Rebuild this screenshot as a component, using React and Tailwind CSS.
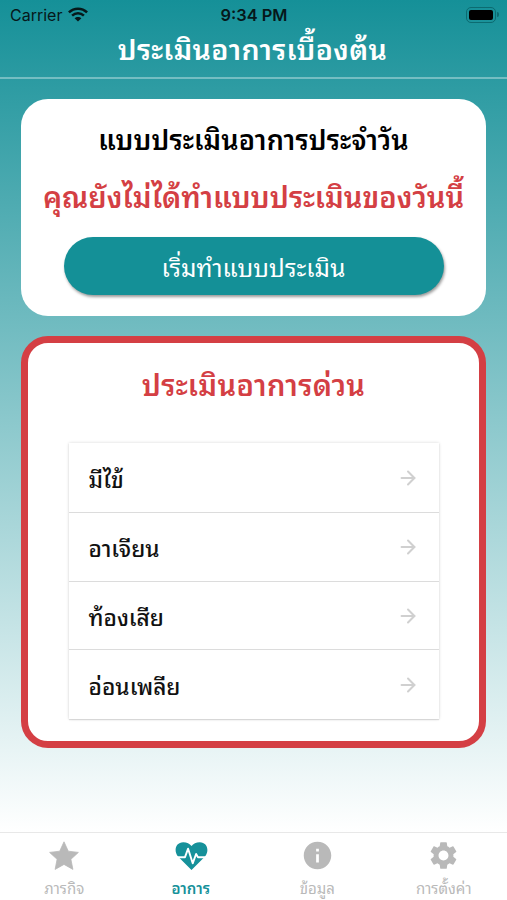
import * as React from 'react';
import { ArrowRight } from 'lucide-react';
import { MdInfo, MdSettings } from 'react-icons/md';

const symptoms = ['มีไข้', 'อาเจียน', 'ท้องเสีย', 'อ่อนเพลีย'];

const StarIcon = () => (
  <svg width="32" height="32" viewBox="0 0 32 32">
    <path
      d="M16 1.800 20.300 11.200 30.400 12.400 22.900 19.300 24.900 29.400 16 24.400 7.100 29.400 9.100 19.300 1.600 12.400 11.700 11.200z"
      fill="#b9b9b9"
      stroke="#b9b9b9"
      strokeWidth=".8"
      strokeLinejoin="round"
    />
  </svg>
);

const HeartPulse = () => (
  <svg width="34" height="30" viewBox="0 0 34 30">
    <path
      d="M17.500 29 4 15.500C-.6 9.500 1.600 1.600 9.200 1.300c3.700 0 6.500 1.400 8.300 3.700 1.800-2.300 4.600-3.700 8.300-3.700 7.600.3 9.800 8.200 5.200 14.200z"
      fill="#16919a"
    />
    <path
      d="M1 16.200h10l3.100-8.500 4.600 14.600 3.400-9.300 1.900 3.200H34"
      fill="none"
      stroke="#fff"
      strokeWidth="1.900"
      strokeLinejoin="round"
    />
  </svg>
);

const WifiIcon = () => (
  <svg width="20" height="15" viewBox="0 0 20 15" fill="none" stroke="#06181a" strokeWidth="2.500">
    <path d="M.9 5.400c5.200-5 13-5 18.200 0M4.100 8.700c3.400-3.200 8.400-3.200 11.800 0" />
    <path d="M10 14.600 6.600 11.300c1.900-1.800 4.900-1.800 6.800 0z" fill="#06181a" stroke="none" />
  </svg>
);

const StatusBar = () => (
  <div className="flex h-[29px] items-center justify-between pl-[10px] pr-[8px] font-['Inter','Liberation_Sans',sans-serif] text-[#06181a]">
    <div className="flex w-[118px] items-center gap-[6px]">
      <span className="text-[16px] leading-5">Carrier</span>
      <WifiIcon />
    </div>
    <span className="pt-px text-[16.400px] leading-5 font-semibold">9:34 PM</span>
    <div className="flex w-[119px] items-center justify-end gap-px">
      <div className="h-4 w-[30px] rounded-[5px] border border-[#0c6b71] p-[2px]">
        <div className="h-full rounded-[2px] bg-black" />
      </div>
      <div className="h-[5px] w-[2px] rounded-r bg-[#0c6b71]" />
    </div>
  </div>
);

const SymptomRow = ({ label }) => (
  <div className="flex h-[68.700px] items-center justify-between border-b border-[#dcdcdc] pr-[20px] pl-5 first:h-[70px] last:border-b-0">
    <span className="text-[22.600px] leading-8 font-medium whitespace-nowrap text-[#111]">{label}</span>
    <ArrowRight size={22} color="#d0d0d0" strokeWidth={2.2} />
  </div>
);

const TabItem = ({ icon, label, active }) => (
  <div className={`flex flex-1 flex-col items-center ${active ? 'font-semibold text-[#16919a]' : 'text-[#b9b9b9]'}`}>
    <div className="flex h-[44px] items-center pt-px">{icon}</div>
    <span className="text-[15px] leading-5 whitespace-nowrap">{label}</span>
  </div>
);

const App = () => {
  return (
    <div className="flex h-[900px] w-[507px] flex-col overflow-hidden bg-white font-['Noto_Sans_Thai_Looped','Noto_Sans_Thai','Noto_Sans',sans-serif]">
      <div className="flex h-[832px] flex-col bg-linear-to-b/srgb from-[#159098] to-white">
        <StatusBar />
        <header className="flex h-[50px] items-center justify-center border-b-2 border-white/35 pr-[2px] pb-3">
          <h1 className="text-[28.500px] leading-9 font-semibold tracking-[0.4px] whitespace-nowrap text-white">
            ประเมินอาการเบื้องต้น
          </h1>
        </header>

        {/* Daily assessment */}
        <section className="mx-[21px] mt-5 flex h-[217px] flex-col items-center rounded-[27px] bg-white pt-[19px]">
          <h2 className="text-[27px] leading-10 font-semibold tracking-[0.150px] whitespace-nowrap text-black">
            แบบประเมินอาการประจำวัน
          </h2>
          <p className="mt-[17px] text-[29px] leading-10 font-semibold whitespace-nowrap text-[#d43f44]">
            คุณยังไม่ได้ทำแบบประเมินของวันนี้
          </p>
          <button className="mt-[22px] flex h-[58px] w-[380px] items-center justify-center rounded-[29px] bg-[#149097] pt-0.5 text-[24.300px] leading-8 tracking-[0.150px] whitespace-nowrap text-white shadow-[1px_2px_3px_rgba(0,0,0,0.4)]">
            เริ่มทำแบบประเมิน
          </button>
        </section>

        {/* Quick assessment */}
        <section className="mx-[21px] mt-5 flex h-[412px] flex-col items-center rounded-[27px] border-[7px] border-[#d43f44] bg-white pt-5">
          <h2 className="text-[29px] leading-10 font-semibold tracking-[0.350px] whitespace-nowrap text-[#d43f44]">
            ประเมินอาการด่วน
          </h2>
          <div className="mt-10 w-[370px] shadow-[0_0_3px_rgba(0,0,0,0.16),0_1px_1px_rgba(0,0,0,0.1)]">
            {symptoms.map((label) => (
              <SymptomRow key={label} label={label} />
            ))}
          </div>
        </section>
      </div>

      <nav className="flex h-[68px] border-t border-[#e8e8e8] bg-white pl-px">
        <TabItem icon={<StarIcon />} label="ภารกิจ" />
        <TabItem icon={<HeartPulse />} label="อาการ" active />
        <TabItem icon={<MdInfo size={33} />} label="ข้อมูล" />
        <TabItem icon={<MdSettings size={33} />} label="การตั้งค่า" />
      </nav>
    </div>
  );
};

export default App;
